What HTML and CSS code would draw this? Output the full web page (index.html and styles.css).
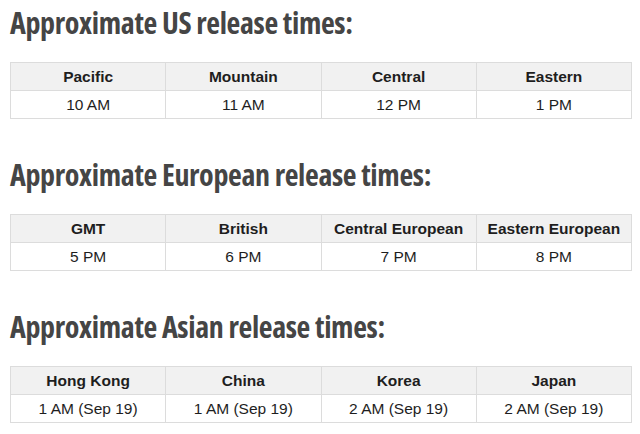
FILE: index.html
```html
<!DOCTYPE html>
<html>
<head>
<meta charset="utf-8">
<link rel="stylesheet" href="styles.css">
</head>
<body>
<main class="page">
  <section class="block">
    <h2 class="title">Approximate US release times:</h2>
    <table class="times">
      <tr><th>Pacific</th><th>Mountain</th><th>Central</th><th>Eastern</th></tr>
      <tr><td>10 AM</td><td>11 AM</td><td>12 PM</td><td>1 PM</td></tr>
    </table>
  </section>
  <section class="block">
    <h2 class="title">Approximate European release times:</h2>
    <table class="times">
      <tr><th>GMT</th><th>British</th><th>Central European</th><th>Eastern European</th></tr>
      <tr><td>5 PM</td><td>6 PM</td><td>7 PM</td><td>8 PM</td></tr>
    </table>
  </section>
  <section class="block">
    <h2 class="title">Approximate Asian release times:</h2>
    <table class="times">
      <tr><th>Hong Kong</th><th>China</th><th>Korea</th><th>Japan</th></tr>
      <tr><td>1 AM (Sep 19)</td><td>1 AM (Sep 19)</td><td>2 AM (Sep 19)</td><td>2 AM (Sep 19)</td></tr>
    </table>
  </section>
</main>
</body>
</html>
```

FILE: styles.css
```css
html, body {
  margin: 0;
  padding: 0;
  background: #fff;
}
.page {
  padding: 0 8px 0 10px;
  display: flex;
  flex-direction: column;
  gap: 33px;
}
.block {
  display: flex;
  flex-direction: column;
}
.title {
  margin: 0;
  padding-top: 3px;
  font-family: "Open Sans", sans-serif;
  font-stretch: condensed;
  font-weight: 700;
  font-size: 30px;
  line-height: 40px;
  letter-spacing: -0.35px;
  color: #454545;
  height: 59px;
}
.times {
  width: 622px;
  border-collapse: collapse;
  table-layout: fixed;
  font-family: "Liberation Sans", Arial, sans-serif;
  font-size: 15.5px;
  color: #1e1e1e;
}
.times tr {
  height: 28px;
}
.times th, .times td {
  border: 1px solid #dcdcdc;
  padding: 0 2px;
  line-height: 18px;
  text-align: center;
  white-space: nowrap;
}
.times th {
  background: #f1f1f1;
  font-weight: 700;
}
.times td {
  background: #fff;
}
```
